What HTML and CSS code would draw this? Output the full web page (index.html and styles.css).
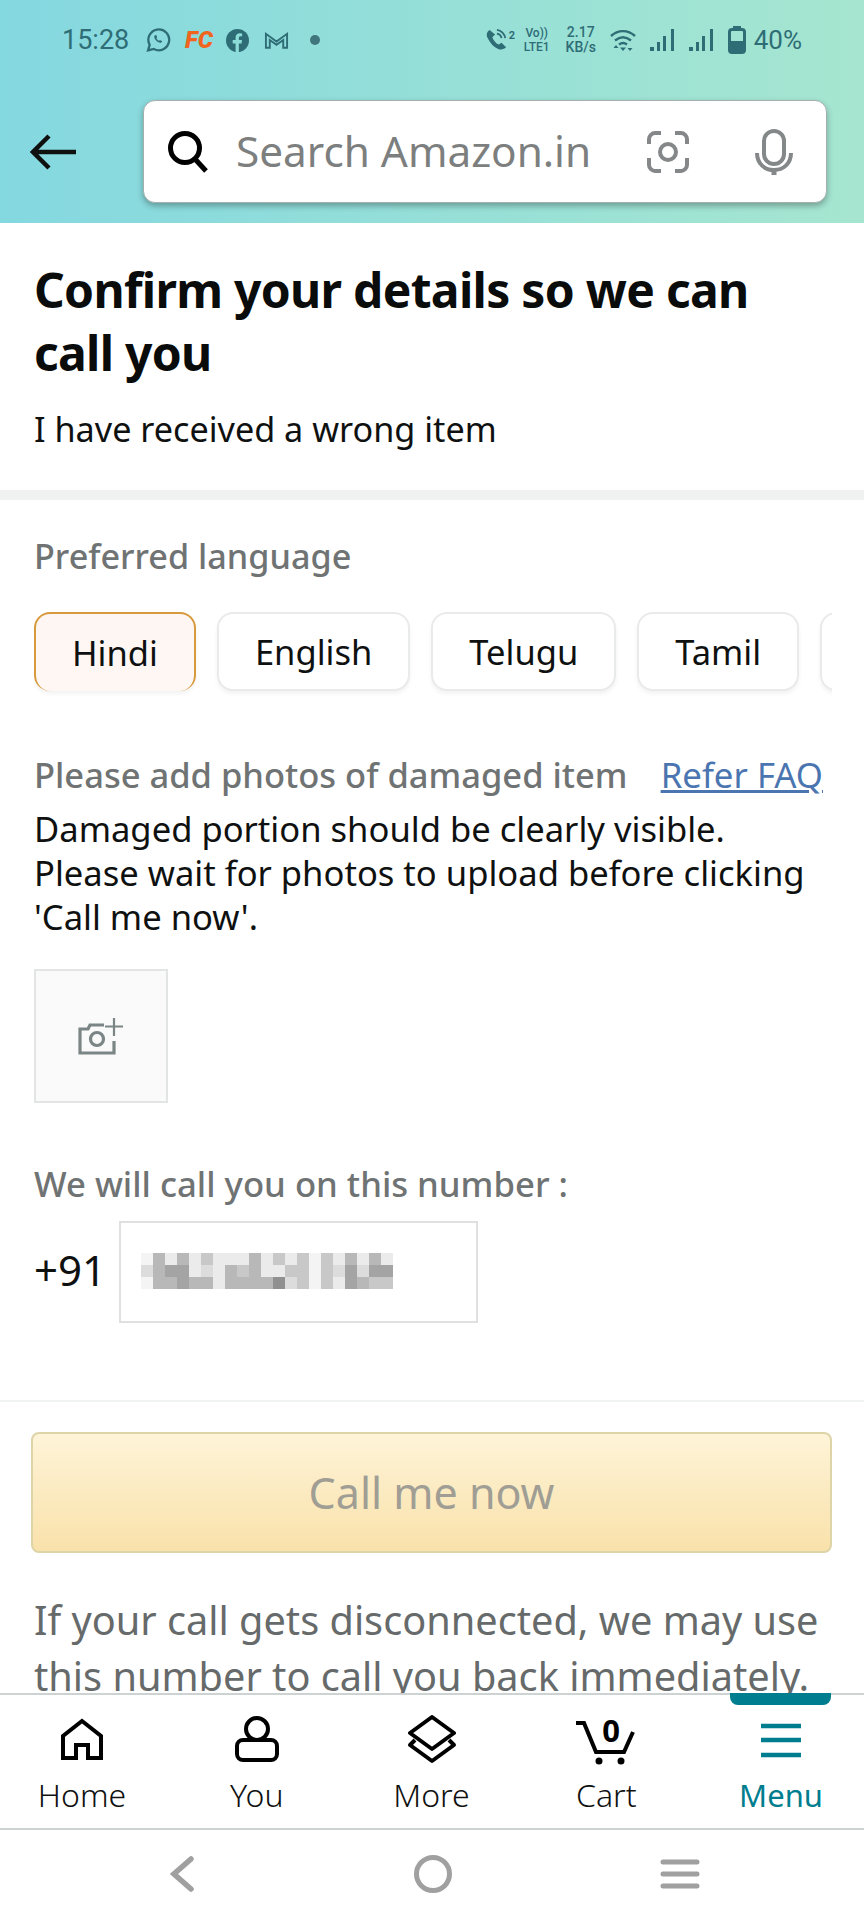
FILE: index.html
```html
<!DOCTYPE html>
<html lang="en">
<head>
    <meta charset="UTF-8">
    <meta name="viewport" content="width=device-width, initial-scale=1.0">
    <title>Confirm your details</title>
    <link rel="stylesheet" href="styles.css">
</head>
<body>
    <header class="top">
        <div class="status">
            <div class="status-left">
                <span class="time">15:28</span>
                <svg class="ico-wa" viewBox="0 0 24 24" fill="none" stroke="#2f6d76" stroke-width="2.2"><path d="M2 22l1.5-5.4A10 10 0 1 1 7.500 20.600z"/><path d="M8.500 7.500c-1 1-.8 3 1.200 5s4.200 2.800 5.300 1.600l.6-1-2.200-1.200-.9.800c-1-.4-2-1.400-2.500-2.500l.8-.9-1-2.200z" fill="#2f6d76" stroke="none"/></svg>
                <span class="fc">FC</span>
                <svg class="ico-fb" viewBox="0 0 24 24"><circle cx="12" cy="12" r="12" fill="#2f6d76"/><path d="M10 24v-9H7v-3.500h3V9c0-3 1.800-4.600 4.400-4.600l2.400.2v3h-1.600c-1.400 0-1.800.8-1.800 1.700v2.200h3.300l-.5 3.500h-2.800v9z" fill="#8cdcd8"/></svg>
                <svg class="ico-m" viewBox="0 0 26 19" fill="none" stroke="#2f6d76" stroke-width="2"><path d="M2 17V2.500l11 8 11-8V17h-4V9l-7 5-7-5v8z"/></svg>
                <span class="dot"></span>
            </div>
            <div class="status-right">
                <svg class="ico-call" viewBox="0 0 24 24"><path d="M5 1C2 3 1 6 3 10c3 6 7 10 12 12 3 1 6 0 8-2l-5-5-3 2c-3-1-6-5-7-8l3-3z" fill="#2f6d76"/><path d="M13 5a6 6 0 0 1 5 5M13 1a10 10 0 0 1 9 9" fill="none" stroke="#2f6d76" stroke-width="2"/></svg>
                <span class="sim">2</span>
                <span class="two-line volte">Vo))<br>LTE1</span>
                <span class="two-line speed">2.17<br>KB/s</span>
                <svg class="ico-wifi" viewBox="0 0 26 22" fill="none" stroke="#2f6d76" stroke-width="2.400"><path d="M1 7c7-6.500 17-6.500 24 0M5 11.500c5-4 11-4 16 0M9 15.500c2.500-2 5.500-2 8 0"/><path d="M8.500 19l-2.500-3-2.500 3zM17.500 19l2.500 3 2.500-3zM13 22l-3-3.500h6z" fill="#2f6d76" stroke="none"/></svg>
                <svg class="ico-signal" viewBox="0 0 25 22" fill="#2f6d76"><rect x="0" y="18" width="4" height="4"/><rect x="7" y="13" width="3" height="9"/><rect x="13" y="7" width="3" height="15"/><rect x="21" y="0" width="3" height="22"/></svg>
                <svg class="ico-signal" viewBox="0 0 25 22" fill="#2f6d76"><rect x="0" y="18" width="4" height="4"/><rect x="7" y="13" width="3" height="9"/><rect x="13" y="7" width="3" height="15"/><rect x="21" y="0" width="3" height="22"/></svg>
                <svg class="ico-batt" viewBox="0 0 18 28"><rect x="5" y="0" width="8" height="3" fill="#2f6d76"/><rect x="1.500" y="3.500" width="15" height="23" rx="2.500" fill="none" stroke="#2f6d76" stroke-width="3"/><rect x="1.500" y="15" width="15" height="12" fill="#2f6d76"/></svg>
                <span class="batt-text">40%</span>
            </div>
        </div>
        <div class="search-row">
            <svg class="ico-back" viewBox="0 0 46 36" fill="none" stroke="#0f1111" stroke-width="4.500"><path d="M46 18H3M19 2L3 18l16 16"/></svg>
            <div class="search-box">
                <svg class="ico-search" viewBox="0 0 40 42" fill="none" stroke="#000" stroke-width="5"><circle cx="17" cy="17" r="14.500"/><path d="M27 28l11 12"/></svg>
                <span class="search-text">Search Amazon.in</span>
                <svg class="ico-lens" viewBox="0 0 42 42" fill="none" stroke="#858888" stroke-width="4"><path d="M2 13V8c0-3 3-6 6-6h6M28 2h6c3 0 6 3 6 6v5M40 27v7c0 3-3 6-6 6h-6M14 40H8c-3 0-6-3-6-6v-7"/><circle cx="21" cy="21" r="8"/></svg>
                <svg class="ico-mic" viewBox="0 0 38 46" fill="none" stroke="#858888" stroke-width="4"><rect x="9" y="2" width="20" height="33" rx="10"/><path d="M2 24c0 11 8 17 17 17s17-6 17-17" /><path d="M19 40v6" stroke-width="5"/></svg>
            </div>
        </div>
    </header>

    <main class="content">
        <section class="intro">
            <h1>Confirm your details so we can<br>call you</h1>
            <p>I have received a wrong item</p>
        </section>

        <section class="form">
            <h2 class="lang-title">Preferred language</h2>
            <div class="chips">
                <div class="chip selected">Hindi</div>
                <div class="chip">English</div>
                <div class="chip">Telugu</div>
                <div class="chip">Tamil</div>
                <div class="chip cut"></div>
            </div>

            <div class="photo-head">
                <h2>Please add photos of damaged item</h2>
                <a href="#">Refer FAQ</a>
            </div>
            <p class="photo-note">Damaged portion should be clearly visible.<br>Please wait for photos to upload before clicking<br>'Call me now'.</p>
            <div class="photo-box">
                <svg viewBox="0 0 46 38" fill="none" stroke="#7b8585" stroke-width="3.200"><path d="M36 24v12H2V12h8l2-4h14"/><circle cx="19" cy="22" r="6.500"/><path d="M36 1v18M27 9.500h18" stroke-width="2.200"/></svg>
            </div>

            <h2 class="phone-title">We will call you on this number :</h2>
            <div class="phone-row">
                <span class="prefix">+91</span>
                <div class="phone-input">
                    <svg class="pixels" width="252" height="36" viewBox="0 0 21 3" shape-rendering="crispEdges">
                        <path fill="#f4f4f4" d="M0 0h1v1H0zM14 0h1v1h-1zM0 2h1v1H0zM14 2h1v1h-1zM14 1h1v1h-1z"/>
                        <path fill="#ebebeb" d="M2 0h1v1H2zM4 0h1v1H4zM6 0h3v1H6zM10 0h1v1h-1zM12 0h1v1h-1zM16 0h1v1h-1zM18 0h1v1h-1zM20 0h1v1h-1zM4 1h1v1H4zM6 1h1v1H6zM10 1h2v1h-2zM6 2h1v1H6zM16 2h1v1h-1z"/>
                        <path fill="#dcdcdc" d="M0 1h1v1H0zM5 1h1v1H5zM16 1h1v1h-1zM18 1h1v1h-1zM12 2h1v1h-1z"/>
                        <path fill="#c8c8c8" d="M5 0h1v1H5zM11 0h1v1h-1zM13 0h1v1h-1zM15 0h1v1h-1zM8 1h1v1H8zM12 1h2v1h-2zM15 1h1v1h-1zM13 2h1v1h-1zM15 2h1v1h-1zM19 2h2v1h-2z"/>
                        <path fill="#b8b8b8" d="M1 0h1v1H1zM3 0h1v1H3zM9 0h1v1H9zM17 0h1v1h-1zM19 0h1v1h-1zM1 2h2v1H1zM4 2h2v1H4zM7 2h4v1H7zM18 2h1v1h-1zM1 1h1v1H1zM7 1h1v1H7zM9 1h1v1H9z"/>
                        <path fill="#a4a4a4" d="M2 1h2v1H2zM17 1h1v1h-1zM19 1h2v1h-2zM3 2h1v1H3zM17 2h1v1h-1z"/>
                        <path fill="#909090" d="M11 2h1v1h-1z"/>
                    </svg>
                </div>
            </div>
        </section>

        <section class="action">
            <button class="call-btn" type="button">Call me now</button>
            <p class="call-note">If your call gets disconnected, we may use this number to call you back immediately.</p>
        </section>
    </main>

    <nav class="tabs">
        <span class="tab-mark"></span>
        <div class="tab">
            <svg class="tab-ico" viewBox="0 0 50 50" fill="none" stroke="#000" stroke-width="4"><path d="M6 43V21L25 6l19 15v22H31V30H19v13z"/></svg>
            <span>Home</span>
        </div>
        <div class="tab">
            <svg class="tab-ico" viewBox="0 0 50 50" fill="none" stroke="#000" stroke-width="4"><circle cx="25" cy="14" r="11"/><rect x="5" y="25" width="40" height="20" rx="6"/></svg>
            <span>You</span>
        </div>
        <div class="tab">
            <svg class="tab-ico" viewBox="0 0 50 50" fill="none" stroke="#000" stroke-width="4" stroke-linejoin="round"><path d="M25 2l22 16-22 16L3 18z"/><path d="M8 25l-5 5 22 16 22-16-5-5"/></svg>
            <span>More</span>
        </div>
        <div class="tab">
            <div class="cart-ico">
                <svg viewBox="0 0 60 50" fill="none" stroke="#000" stroke-width="4"><path d="M0 8h8l12 29h28l9-20"/><circle cx="23" cy="46" r="3.500" fill="#000" stroke="none"/><circle cx="45" cy="46" r="3.500" fill="#000" stroke="none"/></svg>
                <span class="cart-count">0</span>
            </div>
            <span>Cart</span>
        </div>
        <div class="tab active">
            <svg class="tab-ico" viewBox="0 0 50 50" fill="none" stroke="#007e8f" stroke-width="4.500"><path d="M5 11h40M5 25h40M5 40h40"/></svg>
            <span>Menu</span>
        </div>
    </nav>

    <div class="sysnav">
        <svg class="sys-back" viewBox="0 0 24 36" fill="none" stroke="#a0a0a0" stroke-width="5.500" stroke-linecap="round"><path d="M21 3L4 18l17 15"/></svg>
        <svg class="sys-home" viewBox="0 0 38 38" fill="none" stroke="#a0a0a0" stroke-width="5"><circle cx="19" cy="19" r="16.500"/></svg>
        <svg class="sys-menu" viewBox="0 0 40 32" fill="none" stroke="#a0a0a0" stroke-width="5" stroke-linecap="round"><path d="M3 4h34M3 16h34M3 28h34"/></svg>
    </div>
</body>
</html>
```

FILE: styles.css
```css
* {
    box-sizing: border-box;
}
html, body {
    margin: 0;
    height: 1920px;
}
body {
    display: flex;
    flex-direction: column;
    overflow: hidden;
    background: white;
    color: #0f1111;
    font-family: "Noto Sans", "Open Sans", sans-serif;
}
h1, h2, p {
    margin: 0;
}

/* top bar */
.top {
    height: 223px;
    flex: none;
    background: linear-gradient(90deg, #84d8e0, #a6e6d0);
}
.status {
    height: 80px;
    padding: 22px 62px 0 62px;
    display: flex;
    justify-content: space-between;
    color: #2f6d76;
    font-family: Roboto, sans-serif;
}
.status-left, .status-right {
    display: flex;
    align-items: center;
    height: 36px;
}
.time {
    font-size: 27px;
    width: 84px;
}
.ico-wa {
    width: 25px;
    height: 26px;
    margin-right: 14px;
}
.fc {
    width: 27px;
    margin-right: 14px;
    color: #f0641e;
    font-size: 24px;
    font-weight: 900;
    font-style: italic;
}
.ico-fb {
    width: 23px;
    height: 23px;
    margin-right: 15px;
}
.ico-m {
    width: 25px;
    height: 19px;
    margin-right: 21px;
}
.dot {
    width: 10px;
    height: 10px;
    border-radius: 50%;
    background: #41757c;
}
.ico-call {
    width: 22px;
    height: 22px;
}
.sim {
    width: 15px;
    padding: 0 0 10px 2px;
    font-size: 11px;
    font-weight: 700;
}
.two-line {
    font-size: 13px;
    line-height: 14px;
    font-weight: 500;
    text-align: center;
}
.volte {
    width: 30px;
    margin-right: 13px;
    font-size: 12px;
}
.speed {
    width: 32px;
    margin-right: 13px;
    font-size: 14px;
    line-height: 15px;
}
.ico-wifi {
    width: 26px;
    height: 22px;
    margin-right: 14px;
}
.ico-signal {
    width: 25px;
    height: 22px;
    margin-right: 14px;
}
.ico-batt {
    width: 18px;
    height: 28px;
    margin-right: 8px;
}
.batt-text {
    font-size: 26px;
}

.search-row {
    display: flex;
    align-items: center;
    padding: 20px 37px 0 30px;
}
.ico-back {
    width: 46px;
    height: 36px;
    margin-right: 67px;
}
.search-box {
    flex: 1;
    height: 103px;
    display: flex;
    align-items: center;
    padding: 0 33px 0 24px;
    background: white;
    border: 1px solid #a3b0ae;
    border-radius: 12px;
    box-shadow: 0 3px 6px rgba(0,0,0,0.3);
}
.ico-search {
    width: 40px;
    height: 42px;
    margin-right: 28px;
}
.search-text {
    flex: 1;
    padding-bottom: 2px;
    color: #7d7f7f;
    font-size: 42.300px;
}
.ico-lens {
    width: 42px;
    height: 42px;
    margin-right: 66px;
}
.ico-mic {
    width: 38px;
    height: 46px;
}

/* page body */
.content {
    flex: 1;
    min-height: 0;
    overflow: hidden;
}
.intro {
    height: 277px;
    padding: 35px 34px 0;
    border-bottom: 10px solid #f0f1f1;
}
.intro h1 {
    font-size: 48px;
    line-height: 63px;
    font-weight: 700;
    letter-spacing: -0.7px;
    color: #0a0c0c;
}
.intro p {
    margin-top: 23px;
    font-size: 34.2px;
    line-height: 44px;
}
.form {
    height: 902px;
    padding: 0 34px;
    border-bottom: 2px solid #f2f3f3;
}
.form h2 {
    color: #6f7373;
    font-size: 34.500px;
    line-height: 44px;
    font-weight: 500;
}
.form .lang-title {
    padding-top: 34px;
    height: 78px;
    font-size: 34.200px;
}
.chips {
    display: flex;
    gap: 21px;
    margin-top: 34px;
    margin-right: -2px;
    overflow: hidden;
    padding-bottom: 8px;
}
.chip {
    height: 79px;
    padding: 0 36px;
    display: flex;
    align-items: center;
    background: white;
    border: 2px solid #e9eaea;
    border-radius: 16px;
    font-size: 34.500px;
    box-shadow: 0 3px 4px rgba(0,0,0,0.05);
}
.chip.selected {
    background: linear-gradient(#fdf6f2, #fff7f3);
    border: 2px solid #d79a3c;
    border-bottom: none;
}
.chip.cut {
    width: 40px;
    flex: none;
}
.photo-head {
    display: flex;
    justify-content: space-between;
    margin-top: 54px;
    padding-right: 7px;
}
.photo-head a {
    color: #4a75b0;
    font-size: 34.800px;
    line-height: 44px;
}
.photo-note {
    margin-top: 10px;
    font-size: 34.600px;
    line-height: 44px;
}
.photo-box {
    width: 134px;
    height: 134px;
    margin-top: 30px;
    display: flex;
    align-items: center;
    justify-content: center;
    background: #fafafa;
    border: 2px solid #e3e5e5;
}
.photo-box svg {
    width: 46px;
    height: 38px;
}
.form .phone-title {
    margin-top: 59px;
    font-size: 34.700px;
}
.phone-row {
    display: flex;
    align-items: center;
    margin-top: 15px;
}
.prefix {
    width: 85px;
    padding-bottom: 6px;
    font-size: 42px;
}
.phone-input {
    width: 359px;
    height: 102px;
    padding: 30px 0 0 20px;
    border: 2px solid #dfe1e1;
}
.pixels {
    display: block;
}
.action {
    padding: 30px 32px 0 31px;
}
.call-btn {
    display: block;
    width: 100%;
    height: 121px;
    background: linear-gradient(#fef4d8, #f9e1aa);
    border: 2px solid #ddd4a8;
    border-radius: 8px;
    color: #a09e94;
    font-family: inherit;
    font-size: 43px;
}
.call-note {
    margin: 39px 2px 0 3px;
    color: #666a6a;
    font-size: 39.700px;
    line-height: 56px;
}

/* bottom tabs */
.tabs {
    position: relative;
    flex: none;
    height: 137px;
    display: flex;
    justify-content: space-between;
    padding: 20px 23px 0 22px;
    background: white;
    border-top: 2px solid #cdd2d2;
    border-bottom: 2px solid #cdd2d2;
}
.tab-mark {
    position: absolute;
    top: -2px;
    left: 730px;
    width: 101px;
    height: 12px;
    background: #007e8f;
    border-radius: 0 0 8px 8px;
}
.tab {
    width: 120px;
    display: flex;
    flex-direction: column;
    align-items: center;
    font-size: 32px;
    font-weight: 300;
    line-height: 44px;
}
.tab-ico {
    width: 50px;
    height: 50px;
    margin-bottom: 8px;
}
.tab.active {
    color: #007e8f;
    font-size: 31px;
    font-weight: 400;
}
.cart-ico {
    position: relative;
    width: 60px;
    height: 50px;
    margin-bottom: 8px;
}
.cart-ico svg {
    display: block;
}
.cart-count {
    position: absolute;
    top: -5px;
    left: 26px;
    color: #000;
    font-size: 31px;
    line-height: 40px;
    font-weight: 700;
}

/* system nav */
.sysnav {
    flex: none;
    height: 90px;
    display: flex;
    align-items: center;
    justify-content: space-between;
    padding: 0 164px 2px 170px;
}
.sys-back {
    width: 24px;
    height: 36px;
}
.sys-home {
    width: 38px;
    height: 38px;
    margin-left: 12px;
}
.sys-menu {
    width: 40px;
    height: 32px;
}
```
